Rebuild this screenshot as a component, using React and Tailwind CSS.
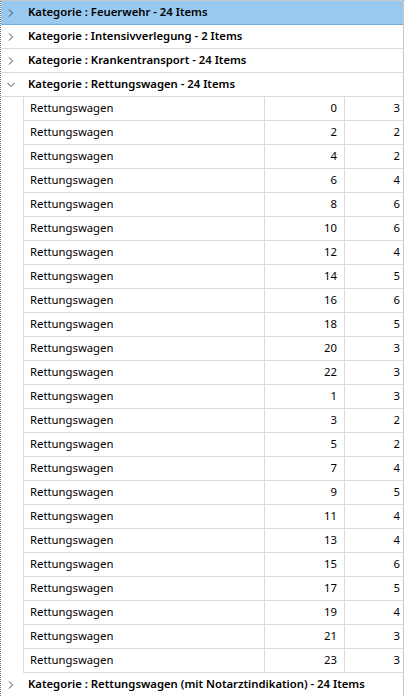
const rows = [
  [0, 3], [2, 2], [4, 2], [6, 4], [8, 6], [10, 6], [12, 4], [14, 5], [16, 6], [18, 5], [20, 3], [22, 3],
  [1, 3], [3, 2], [5, 2], [7, 4], [9, 5], [11, 4], [13, 4], [15, 6], [17, 5], [19, 4], [21, 3], [23, 3],
];

function Chevron({ open }) {
  return (
    <svg width="8" height="8" viewBox="0 0 8 8" className="shrink-0">
      {open ? (
        <polyline points="0.5,2 4,5.5 7.5,2" fill="none" stroke="#444" strokeWidth="1" />
      ) : (
        <polyline points="2,0.5 5.5,4 2,7.5" fill="none" stroke="#444" strokeWidth="1" />
      )}
    </svg>
  );
}

function GroupRow({ label, open, selected }) {
  return (
    <div
      className={
        'h-6 flex items-center border-b ' +
        (selected ? 'bg-[#99c9ef] border-[#76aedb]' : 'bg-white border-[#dadada]')
      }
    >
      <div className="w-[27px] pl-[6px] flex items-center">
        <Chevron open={open} />
      </div>
      <span className="text-[11.3px] font-semibold text-black whitespace-nowrap">{label}</span>
    </div>
  );
}

export default function App() {
  return (
    <div
      className="w-[405px] h-[696px] overflow-hidden bg-white border-t border-[#c8c8c8]"
      style={{ fontFamily: '"Noto Sans", "Open Sans", sans-serif' }}
    >
      <div className="w-[404px] h-full border-l border-dotted border-[#777] border-r-0 flex flex-col">
        <div className="border-r border-[#c8c8c8] flex-1 flex flex-col">
          <GroupRow label="Kategorie : Feuerwehr - 24 Items" selected />
          <GroupRow label="Kategorie : Intensivverlegung - 2 Items" />
          <GroupRow label="Kategorie : Krankentransport - 24 Items" />
          <GroupRow label="Kategorie : Rettungswagen - 24 Items" open />
          <div className="pl-[22px]">
            {rows.map(([a, b], i) => (
              <div key={i} className="h-6 flex border-b border-l border-[#dadada] text-[11.3px] text-black">
                <div className="w-[241px] pl-[6px] flex items-center border-r border-[#dadada]">Rettungswagen</div>
                <div className="w-[80px] pr-[7px] flex items-center justify-end border-r border-[#dadada]">{a}</div>
                <div className="flex-1 pr-[3px] flex items-center justify-end">{b}</div>
              </div>
            ))}
          </div>
          <GroupRow label="Kategorie : Rettungswagen (mit Notarztindikation) - 24 Items" />
        </div>
      </div>
    </div>
  );
}
